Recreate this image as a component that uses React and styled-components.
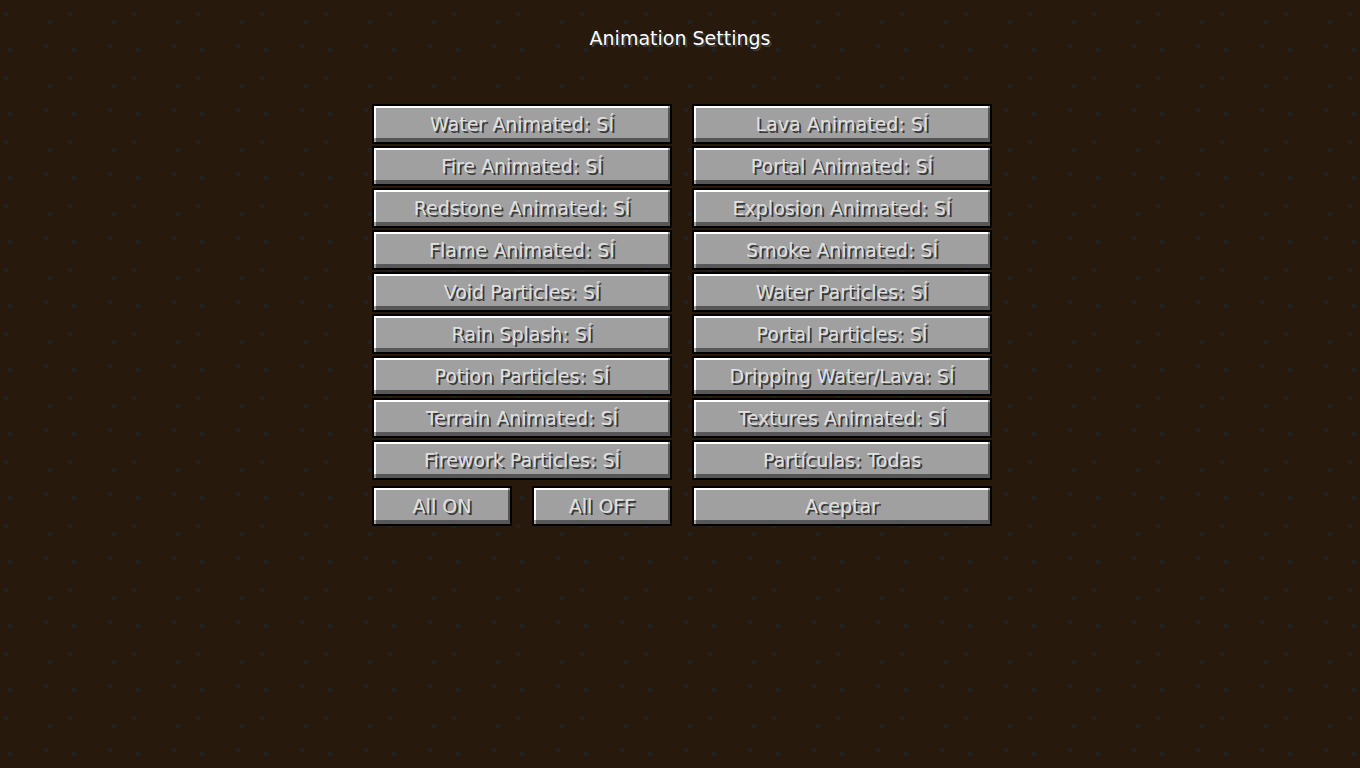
import styled, { createGlobalStyle } from "styled-components";

const GlobalStyle = createGlobalStyle`
  * {
    box-sizing: border-box;
  }

  body {
    margin: 0;
    min-height: 100vh;
    background-color: #28190d;
    background-image:
      conic-gradient(from 90deg at 60px 60px, #222222 90deg, transparent 0),
      conic-gradient(from 90deg at 60px 60px, #222222 90deg, transparent 0),
      conic-gradient(from 90deg at 60px 60px, #222222 90deg, transparent 0),
      conic-gradient(from 90deg at 60px 60px, #222222 90deg, transparent 0);
    background-position: 8px 16px, 52px 24px, 48px 48px, 12px 52px;
    background-size: 64px 64px;
    font-family: "DejaVu Sans", sans-serif;
  }
`;

const Screen = styled.main`
  display: flex;
  flex-direction: column;
  align-items: center;
  padding: 26px 0 24px;
`;

const Title = styled.h1`
  margin: 0 0 54px;
  font-size: 19px;
  font-weight: 400;
  line-height: 24px;
  color: #ffffff;
  text-shadow: 2px 2px #3f3f3f;
`;

const Panel = styled.div`
  display: flex;
  flex-direction: column;
  gap: 6px;
  width: 100%;
  max-width: 624px;
  padding-left: 4px;
`;

const Options = styled.div`
  display: grid;
  grid-template-columns: 1fr 1fr;
  gap: 2px 20px;
`;

const Footer = styled(Options)`
  grid-template-columns: repeat(4, 1fr);
`;

const Button = styled.button`
  grid-column: span ${(props) => props.$span || 1};
  height: 40px;
  padding: 0;
  border: 2px solid #000000;
  background:
    linear-gradient(#a0a0a0, #a0a0a0) right top / 2px 2px no-repeat,
    linear-gradient(#a0a0a0, #a0a0a0) left bottom / 2px 4px no-repeat,
    linear-gradient(#ffffff, #ffffff) left top / 100% 2px no-repeat,
    linear-gradient(#ffffff, #ffffff) left top / 2px 100% no-repeat,
    linear-gradient(#575757, #575757) right top / 2px 100% no-repeat,
    linear-gradient(#575757, #575757) left bottom / 100% 4px no-repeat,
    #a0a0a0;
  font-family: inherit;
  font-size: 19px;
  line-height: 24px;
  color: #e0e0e0;
  text-shadow: 2px 2px #383838;
  white-space: nowrap;
  cursor: pointer;

  &:hover {
    color: #ffffa0;
  }
`;

const options = [
  "Water Animated: SÍ",
  "Lava Animated: SÍ",
  "Fire Animated: SÍ",
  "Portal Animated: SÍ",
  "Redstone Animated: SÍ",
  "Explosion Animated: SÍ",
  "Flame Animated: SÍ",
  "Smoke Animated: SÍ",
  "Void Particles: SÍ",
  "Water Particles: SÍ",
  "Rain Splash: SÍ",
  "Portal Particles: SÍ",
  "Potion Particles: SÍ",
  "Dripping Water/Lava: SÍ",
  "Terrain Animated: SÍ",
  "Textures Animated: SÍ",
  "Firework Particles: SÍ",
  "Partículas: Todas",
];

function App() {
  return (
    <>
      <GlobalStyle />
      <Screen>
        <Title>Animation Settings</Title>
        <Panel>
          <Options>
            {options.map((label) => (
              <Button type="button" key={label}>
                {label}
              </Button>
            ))}
          </Options>
          <Footer>
            <Button type="button">All ON</Button>
            <Button type="button">All OFF</Button>
            <Button type="button" $span={2}>
              Aceptar
            </Button>
          </Footer>
        </Panel>
      </Screen>
    </>
  );
}

export default App;
